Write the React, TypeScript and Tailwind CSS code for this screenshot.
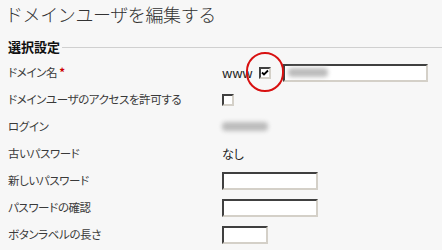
const inputCls =
  "h-[18px] bg-white border-2 border-t-[#404040] border-l-[#404040] border-b-[#d4d0c8] border-r-[#d4d0c8]";

function Box({ checked }: { checked?: boolean }) {
  return (
    <span className="flex h-[12px] w-[12px] items-center justify-center bg-white border-2 border-t-[#404040] border-l-[#404040] border-b-[#d4d0c8] border-r-[#d4d0c8]">
      {checked && (
        <svg width="8" height="8" viewBox="0 0 8 8">
          <path d="M1 3.5 L3 5.5 L7 1.5" fill="none" stroke="#000" strokeWidth="1.8" />
        </svg>
      )}
    </span>
  );
}

function Blur({ w }: { w: number }) {
  return <span className="block h-[9px] bg-[#bcbcbc] blur-[2px] rounded-sm" style={{ width: w }} />;
}

function Row({ label, children }: { label: React.ReactNode; children?: React.ReactNode }) {
  return (
    <div className="grid h-[27px] grid-cols-[214px_1fr] items-center">
      <div className="text-[11.5px] tracking-[-0.4px] text-[#3a3a3a]">{label}</div>
      <div className="flex items-center">{children}</div>
    </div>
  );
}

export default function App() {
  return (
    <div className="h-[250px] w-[442px] overflow-hidden bg-[#f7f7f7] font-['Noto_Sans_CJK_JP',sans-serif] text-[12px] [font-feature-settings:'palt']">
      <h1 className="pl-[5px] pt-[1px] text-[18px] leading-[26px] font-light tracking-[-0.4px] text-[#333] [font-feature-settings:normal]">
        ドメインユーザを編集する
      </h1>
      <div className="mt-[13px] flex items-center gap-[2px] pl-[8px]">
        <span className="text-[13px] font-bold leading-[14px] text-[#111] [font-feature-settings:normal]">選択設定</span>
        <span className="h-px flex-1 bg-[#d0d0d0]" />
      </div>
      <div className="mt-[5px] pl-[8px]">
        <Row
          label={
            <>
              ドメイン名 <span className="font-bold text-[#c00]">*</span>
            </>
          }
        >
          <span className="text-[13px] text-[#222] tracking-[-0.3px]">www</span>
          <span className="relative ml-[7px]">
            <Box checked />
            <span className="absolute left-[-13px] top-[-15px] h-[40px] w-[38px] rounded-full border-2 border-[#d81010]" />
          </span>
          <span className={`${inputCls} ml-[12px] flex w-[145px] items-center pl-[3px]`}>
            <Blur w={40} />
          </span>
        </Row>
        <Row label="ドメインユーザのアクセスを許可する">
          <Box />
        </Row>
        <Row label="ログイン">
          <Blur w={46} />
        </Row>
        <Row label="古いパスワード">
          <span className="text-[#222]">なし</span>
        </Row>
        <Row label="新しいパスワード">
          <span className={`${inputCls} w-[96px]`} />
        </Row>
        <Row label="パスワードの確認">
          <span className={`${inputCls} w-[96px]`} />
        </Row>
        <Row label="ボタンラベルの長さ">
          <span className={`${inputCls} w-[46px]`} />
        </Row>
      </div>
    </div>
  );
}
